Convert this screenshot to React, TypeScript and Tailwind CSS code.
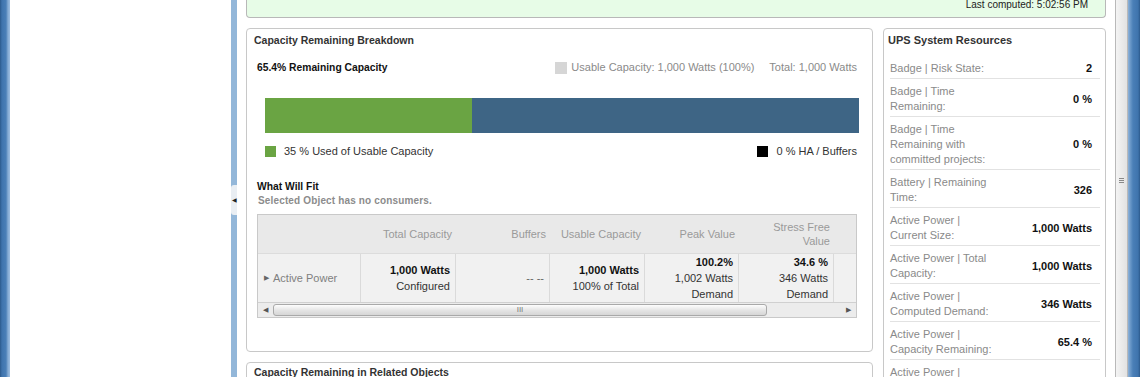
const font = { fontFamily: '"Liberation Sans", Arial, sans-serif' };

type Resource = { label: string[]; value: string };

const resources: Resource[] = [
  { label: ["Badge | Risk State:"], value: "2" },
  { label: ["Badge | Time", "Remaining:"], value: "0 %" },
  { label: ["Badge | Time", "Remaining with", "committed projects:"], value: "0 %" },
  { label: ["Battery | Remaining", "Time:"], value: "326" },
  { label: ["Active Power |", "Current Size:"], value: "1,000 Watts" },
  { label: ["Active Power | Total", "Capacity:"], value: "1,000 Watts" },
  { label: ["Active Power |", "Computed Demand:"], value: "346 Watts" },
  { label: ["Active Power |", "Capacity Remaining:"], value: "65.4 %" },
  { label: ["Active Power |", "Usable Capacity:"], value: "" },
];

const cols = "grid-cols-[103px_95px_94px_95px_94px_95px_1fr]";

function FitTable() {
  return (
    <div className="mt-[6px] ml-[3px] w-[600px] border border-[#c9c9c9] bg-[#e9e9e9]">
      {/* header */}
      <div className={`grid ${cols} h-[39px] border-b border-[#dcdcdc] text-[#9a9a9a] leading-[14px]`}>
        <div />
        <div className="flex items-center justify-end pr-[4px]">Total Capacity</div>
        <div className="flex items-center justify-end pr-[4px]">Buffers</div>
        <div className="flex items-center justify-end pr-[4px]">Usable Capacity</div>
        <div className="flex items-center justify-end pr-[4px]">Peak Value</div>
        <div className="flex flex-col items-end justify-center pr-[4px] text-right">
          <span>Stress Free</span>
          <span>Value</span>
        </div>
        <div />
      </div>
      {/* data row */}
      <div className={`grid ${cols} h-[48px] bg-[#f1f1f1] leading-[16px] text-[#333]`}>
        <div className="flex items-center gap-[4px] pl-[6px] border-r border-[#dadada] text-[#808080]">
          <span className="text-[7px] text-[#666]">▶</span>
          <span>Active Power</span>
        </div>
        <div className="flex flex-col items-end justify-center pr-[5px] border-r border-[#dadada]">
          <span className="font-bold text-[#111]">1,000 Watts</span>
          <span>Configured</span>
        </div>
        <div className="flex items-center justify-end pr-[5px] border-r border-[#dadada] text-[#666]">-- --</div>
        <div className="flex flex-col items-end justify-center pr-[5px] border-r border-[#dadada]">
          <span className="font-bold text-[#111]">1,000 Watts</span>
          <span>100% of Total</span>
        </div>
        <div className="flex flex-col items-end justify-center pr-[5px] border-r border-[#dadada]">
          <span className="font-bold text-[#111]">100.2%</span>
          <span>1,002 Watts</span>
          <span>Demand</span>
        </div>
        <div className="flex flex-col items-end justify-center pr-[5px] border-r border-[#dadada]">
          <span className="font-bold text-[#111]">34.6 %</span>
          <span>346 Watts</span>
          <span>Demand</span>
        </div>
        <div className="bg-[#f1f1f1]" />
      </div>
      {/* horizontal scrollbar */}
      <div className="flex h-[15px] items-center border-t border-[#d0d0d0] bg-[#ececec]">
        <span className="w-[15px] text-center text-[7px] text-[#555]">◀</span>
        <div className="flex h-[12px] w-[494px] items-center justify-center rounded-[3px] border border-[#a9a9a9] bg-[linear-gradient(to_bottom,#fdfdfd,#e4e4e4_55%,#d6d6d6)] text-[8px] leading-none text-[#777]">
          III
        </div>
        <div className="flex-1" />
        <span className="w-[15px] text-center text-[7px] text-[#555]">▶</span>
      </div>
    </div>
  );
}

function Breakdown() {
  return (
    <div className="w-[627px] h-[324px] shrink-0 rounded-[4px] border border-[#c8c8c8] bg-white px-[7px] pt-[4px]">
      <div className="text-[10.5px] font-bold leading-[15px] text-[#333]">Capacity Remaining Breakdown</div>

      <div className="mt-[12px] flex items-center justify-between pl-[3px] pr-[8px] leading-[15px]">
        <span className="text-[10.3px] font-bold text-[#111]">65.4% Remaining Capacity</span>
        <div className="flex items-center text-[#8a8a8a]">
          <span className="mr-[4px] inline-block h-[12px] w-[12px] bg-[#d6d6d6]" />
          <span>Usable Capacity: 1,000 Watts (100%)</span>
          <span className="ml-[15px]">Total: 1,000 Watts</span>
        </div>
      </div>

      <div className="ml-[11px] mt-[23px] flex h-[35px] w-[594px]">
        <div className="w-[207px] bg-[#6aa443]" />
        <div className="flex-1 bg-[#3e6585]" />
      </div>

      <div className="ml-[11px] mt-[11px] flex w-[592px] items-center justify-between leading-[14px] text-[#333]">
        <div className="flex items-center">
          <span className="mr-[8px] inline-block h-[11px] w-[11px] bg-[#6aa443]" />
          <span>35 % Used of Usable Capacity</span>
        </div>
        <div className="flex items-center">
          <span className="mr-[8px] inline-block h-[11px] w-[11px] bg-black" />
          <span>0 % HA / Buffers</span>
        </div>
      </div>

      <div className="ml-[3px] mt-[22px] text-[10.3px] font-bold leading-[14px] text-[#111]">What Will Fit</div>
      <div className="ml-[4px] text-[10px] font-bold leading-[14px] tracking-[0.15px] text-[#8c8c8c]">
        Selected Object has no consumers.
      </div>

      <FitTable />
    </div>
  );
}

function Resources() {
  return (
    <div className="h-[400px] flex-1 rounded-[4px] border border-[#c8c8c8] bg-white pl-[6px] pr-[5px] pt-[4px]">
      <div className="-ml-[2px] text-[11px] font-bold leading-[15px] text-[#333]">UPS System Resources</div>
      <div className="mt-[8px]">
        {resources.map((r, i) => (
          <div key={i} className="flex items-center justify-between border-b border-[#e2e2e2] pb-[2px] pt-[5px] leading-[15px]">
            <div className="flex flex-col text-[#8a8a8a]">
              {r.label.map((l, j) => (
                <span key={j}>{l}</span>
              ))}
            </div>
            <span className="pr-[8px] font-bold text-[#111]">{r.value}</span>
          </div>
        ))}
      </div>
    </div>
  );
}

export default function App() {
  return (
    <div className="flex h-[377px] w-[1140px] overflow-hidden bg-white text-[11px]" style={font}>
      {/* left window frame */}
      <div className="w-[10px] shrink-0 bg-[linear-gradient(to_right,#2c5a8c_0px,#3f74ad_2px,#4a7fb7_6px,#86acd4_8px,#9dbde0_10px)]" />
      {/* left (blank) pane */}
      <div className="w-[221px] shrink-0 bg-white" />
      {/* splitter */}
      <div className="relative w-[6px] shrink-0 bg-[#93b7d9]">
        <div className="absolute left-[0px] top-[185px] flex h-[30px] w-[6px] items-center justify-center rounded-l-[3px] bg-[#e9eef3] text-[6px] text-[#222]">
          ◀
        </div>
      </div>

      {/* main content */}
      <div className="flex w-[878px] shrink-0 flex-col gap-[10px] pl-[9px] pr-[9px]">
        <div className="flex h-[18px] shrink-0 items-start justify-end rounded-b-[4px] border-x border-b border-[#b8b8b8] bg-[#e7fce7] pr-[17px]">
          <span className="-mt-[2px] text-[10px] leading-[13px] text-[#222]">Last computed: 5:02:56 PM</span>
        </div>
        <div className="flex shrink-0 gap-[10px]">
          <div className="flex flex-col gap-[10px]">
            <Breakdown />
            <div className="h-[60px] w-[627px] shrink-0 rounded-[4px] border border-[#c8c8c8] bg-white px-[7px] pt-[2px]">
              <div className="text-[10.5px] font-bold leading-[15px] text-[#333]">Capacity Remaining in Related Objects</div>
            </div>
          </div>
          <Resources />
        </div>
      </div>

      {/* right splitter */}
      <div className="flex w-[13px] shrink-0 flex-col items-center border-x border-[#b9b9b9] bg-[linear-gradient(to_right,#f4f4f4,#e2e2e2)] pt-[178px]">
        <div className="flex w-[5px] flex-col gap-[1px]">
          <div className="h-[1px] bg-[#888]" />
          <div className="h-[1px] bg-[#888]" />
          <div className="h-[1px] bg-[#888]" />
        </div>
      </div>
      {/* right window frame */}
      <div className="flex-1 bg-[linear-gradient(to_right,#8fb2d8_0px,#6f9ccb_2px,#4a7fb7_5px,#3f74ad_10px,#2c5a8c_12px)]" />
    </div>
  );
}
